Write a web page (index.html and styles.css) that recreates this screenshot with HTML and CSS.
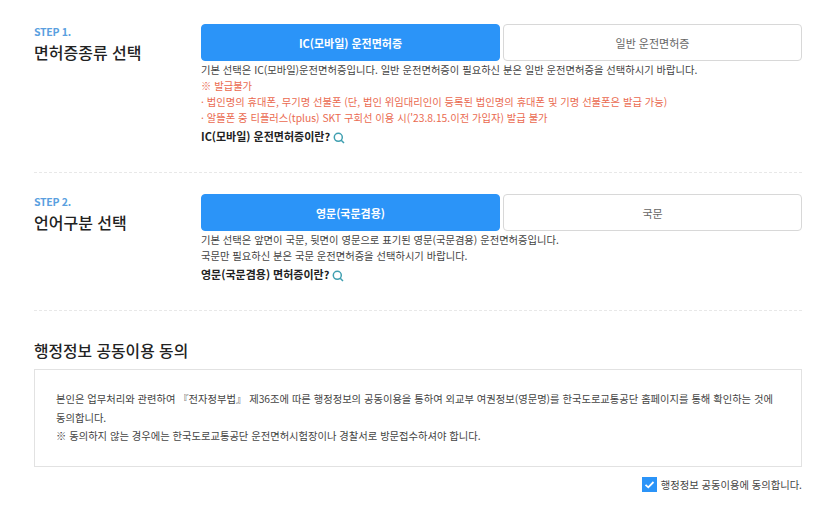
FILE: index.html
```html
<!DOCTYPE html>
<html lang="ko">
<head>
    <meta charset="UTF-8">
    <title>운전면허증 선택</title>
    <link rel="stylesheet" href="styles.css">
</head>
<body>
    <div class="step step-first">
        <div class="step-head">
            <p class="step-no">STEP 1.</p>
            <h2 class="step-title">면허증종류 선택</h2>
        </div>
        <div class="step-body">
            <div class="choice">
                <button class="choice-btn active">IC(모바일) 운전면허증</button>
                <button class="choice-btn">일반 운전면허증</button>
            </div>
            <p class="line">기본 선택은 IC(모바일)운전면허증입니다. 일반 운전면허증이 필요하신 분은 일반 운전면허증을 선택하시기 바랍니다.</p>
            <p class="line warn">※ 발급불가</p>
            <p class="line warn">· 법인명의 휴대폰, 무기명 선불폰 (단, 법인 위임대리인이 등록된 법인명의 휴대폰 및 기명 선불폰은 발급 가능)</p>
            <p class="line warn">· 알뜰폰 중 티플러스(tplus) SKT 구회선 이용 시('23.8.15.이전 가입자) 발급 불가</p>
            <p class="more">IC(모바일) 운전면허증이란?
                <svg class="search-icon" viewBox="0 0 12 12"><circle cx="5.3" cy="5.3" r="4" fill="none" stroke="#3f9fb0" stroke-width="1.5"/><path d="M8.2 8.2 11 11" stroke="#3f9fb0" stroke-width="1.5" fill="none"/></svg>
            </p>
        </div>
    </div>

    <div class="step step-second">
        <div class="step-head">
            <p class="step-no">STEP 2.</p>
            <h2 class="step-title">언어구분 선택</h2>
        </div>
        <div class="step-body">
            <div class="choice">
                <button class="choice-btn active">영문(국문겸용)</button>
                <button class="choice-btn">국문</button>
            </div>
            <p class="line">기본 선택은 앞면이 국문, 뒷면이 영문으로 표기된 영문(국문겸용) 운전면허증입니다.</p>
            <p class="line">국문만 필요하신 분은 국문 운전면허증을 선택하시기 바랍니다.</p>
            <p class="more">영문(국문겸용) 면허증이란?
                <svg class="search-icon" viewBox="0 0 12 12"><circle cx="5.3" cy="5.3" r="4" fill="none" stroke="#3f9fb0" stroke-width="1.5"/><path d="M8.2 8.2 11 11" stroke="#3f9fb0" stroke-width="1.5" fill="none"/></svg>
            </p>
        </div>
    </div>

    <div class="agree">
        <h2 class="agree-title">행정정보 공동이용 동의</h2>
        <div class="agree-box">
            <p>본인은 업무처리와 관련하여 『전자정부법』 제36조에 따른 행정정보의 공동이용을 통하여 외교부 여권정보(영문명)를 한국도로교통공단 홈페이지를 통해 확인하는 것에 동의합니다.</p>
            <p>※ 동의하지 않는 경우에는 한국도로교통공단 운전면허시험장이나 경찰서로 방문접수하셔야 합니다.</p>
        </div>
        <div class="agree-check">
            <span class="checkbox">
                <svg viewBox="0 0 15 15"><path d="M3.5 7.8 6.3 10.3 11.5 5" fill="none" stroke="#fff" stroke-width="1.8"/></svg>
            </span>
            <span>행정정보 공동이용에 동의합니다.</span>
        </div>
    </div>
</body>
</html>
```

FILE: styles.css
```css
body {
    font-family: "Noto Sans CJK KR", "Noto Sans", sans-serif;
    margin: 0;
    padding: 24px 22px 0 34px;
    background-color: #fff;
    color: #333;
}

p {
    margin: 0;
}

.step {
    display: flex;
    box-sizing: border-box;
    border-bottom: 1px dashed #e8e8e8;
}

.step-first {
    height: 149px;
}

.step-second {
    height: 138px;
    padding-top: 21px;
}

.step-head {
    width: 167px;
    flex-shrink: 0;
}

.step-no {
    color: #5a9fe0;
    font-size: 10.5px;
    font-weight: 700;
    letter-spacing: -0.3px;
    line-height: 16px;
}

.step-title {
    margin: 0;
    color: #222;
    font-size: 16px;
    font-weight: 500;
    line-height: 24px;
}

.step-body {
    flex: 1;
}

.choice {
    display: flex;
    gap: 3px;
    margin-bottom: 1px;
}

.choice-btn {
    flex: 1;
    height: 37px;
    padding: 0;
    background-color: #fff;
    border: 1px solid #d8d8d8;
    border-radius: 4px;
    color: #666;
    font-family: inherit;
    font-size: 11px;
}

.choice-btn.active {
    background-color: #2b94f8;
    border-color: #2b94f8;
    color: #fff;
    font-weight: 700;
}

.line {
    font-size: 10.3px;
    line-height: 15.9px;
    color: #444;
}

.warn {
    color: #ea6a50;
}

.more {
    font-size: 11px;
    font-weight: 700;
    line-height: 20px;
    color: #222;
}

.search-icon {
    width: 12px;
    height: 12px;
    vertical-align: -3px;
}

.agree {
    padding-top: 27px;
}

.agree-title {
    margin: 0 0 5px;
    color: #222;
    font-size: 15.8px;
    font-weight: 500;
    line-height: 26px;
}

.agree-box {
    box-sizing: border-box;
    height: 98px;
    padding: 20px 22px 20px 21px;
    border: 1px solid #e2e2e2;
    font-size: 10.3px;
    line-height: 18.5px;
    color: #444;
    word-break: keep-all;
}

.agree-check {
    display: flex;
    justify-content: flex-end;
    align-items: center;
    gap: 4px;
    margin-top: 10px;
    font-size: 10.3px;
    color: #444;
}

.checkbox {
    display: block;
    width: 15px;
    height: 15px;
    background-color: #2b94f8;
}

.checkbox svg {
    display: block;
}
```
